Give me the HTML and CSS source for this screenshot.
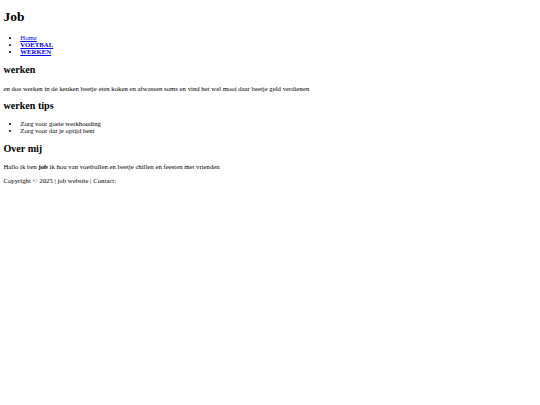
FILE: index.html
```html
<!DOCTYPE html>
<html lang="nl">
<head>
<meta charset="utf-8">
<title>Job</title>
<link rel="stylesheet" href="styles.css">
</head>
<body>
<header class="site-header">
  <h1 class="title">Job</h1>
  <nav class="nav">
    <ul class="nav-list">
      <li><a href="#">Home</a></li>
      <li><a href="#"><strong>VOETBAL</strong></a></li>
      <li><a href="#"><strong>WERKEN</strong></a></li>
    </ul>
  </nav>
</header>
<main class="content">
  <section>
    <h2 class="heading">werken</h2>
    <p class="text">en doe werken in de keuken beetje eten koken en afwassen soms en vind het wel mooi daar beetje geld verdienen</p>
  </section>
  <section>
    <h2 class="heading">werken tips</h2>
    <ul class="list">
      <li>Zorg voor goeie werkhouding</li>
      <li>Zorg voor dat je optijd bent</li>
    </ul>
  </section>
  <section>
    <h2 class="heading">Over mij</h2>
    <p class="text">Hallo ik ben <strong>job</strong> ik hou van voetballen en beetje chillen en feesten met vrienden</p>
  </section>
</main>
<footer class="footer">
  <p class="text">Copyright © 2025 | job website | Contact:</p>
</footer>
</body>
</html>
```
FILE: styles.css
```css
body {
  margin: 3.4px;
  font-family: "Liberation Serif", "Times New Roman", serif;
  font-size: 6.75px;
  color: #000;
  background: #fff;
}
.title {
  font-size: 13.5px;
  margin: 6px 0 9px;
}
.heading {
  font-size: 10.125px;
  margin: 8.4px 0 9.4px;
}
.text {
  margin: 6.75px 0;
}
.nav-list,
.list {
  margin: 6.75px 0;
  padding-left: 16.9px;
}
.nav-list {
  margin-bottom: 8.75px;
}
.list {
  margin-bottom: 7.5px;
}
a {
  color: #0000ee;
}
```
